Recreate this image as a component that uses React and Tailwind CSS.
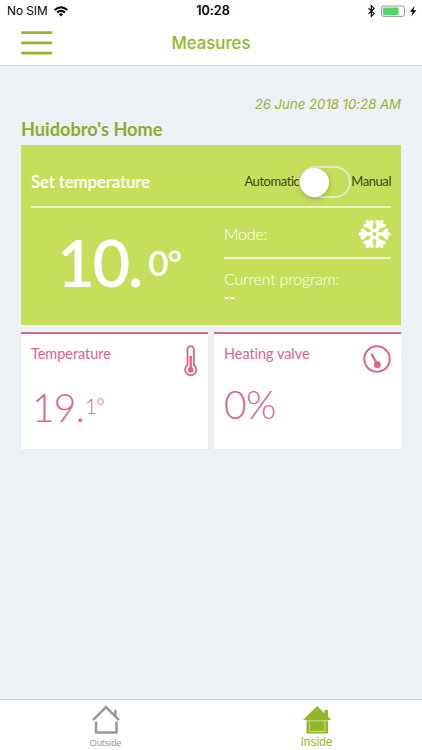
import React from "react";

function StatusBar() {
  return (
    <div className="grid h-[22px] grid-cols-3 items-center pl-[7px] pr-[5px] font-['Inter',sans-serif] text-black">
      <div className="flex items-center gap-[6px] text-[11.8px] leading-[22px]">
        <span className="whitespace-nowrap">No SIM</span>
        <svg width="14" height="11" viewBox="0 0 14 11" fill="none" stroke="black" strokeWidth="2">
          <path d="M.7 4.1Q7-1.5 13.3 4.1M3 6.6Q7 3.1 11 6.6" />
          <path d="M4.8 8.3Q7 6.4 9.2 8.3L7 10.6Z" fill="black" stroke="none" />
        </svg>
      </div>
      <div className="pl-[2px] text-center text-[12.5px] font-semibold leading-[22px]">10:28</div>
      <div className="flex items-center justify-end">
        <svg width="50" height="14" viewBox="0 0 50 14">
          <path d="M1.5 4.2l5.6 5.4-2.8 2.9V1.5l2.8 2.9-5.6 5.4" fill="none" stroke="black" strokeWidth="1.1" />
          <rect x="14.5" y="2" width="23" height="10.4" rx="2.4" fill="none" stroke="#9a9a9a" strokeWidth="1" />
          <rect x="16" y="3.5" width="15.5" height="7.4" rx="1" fill="#4cd964" />
          <path d="M39 5.6q1.4 1.5 0 3z" fill="#9a9a9a" />
          <path d="M47.6 1.8L43 7.7h2.7l-1.4 4.8 5-6.2h-2.9z" fill="black" />
        </svg>
      </div>
    </div>
  );
}

function NavBar() {
  return (
    <div className="flex h-[44px] items-start border-b border-[#d4d9df] pl-[21px] pt-[9px]">
      <svg width="32" height="25" viewBox="0 0 32 25" stroke="#93b72b" strokeWidth="2.8" strokeLinecap="round">
        <path d="M1.4 1.6h28.6M1.4 11.9h28.6M1.4 22.1h28.6" />
      </svg>
      <h1 className="flex-1 pr-[53px] text-center font-['Inter',sans-serif] text-[16.8px] font-medium leading-[24px] text-[#93b72b]">
        Measures
      </h1>
    </div>
  );
}

function Snowflake() {
  return (
    <svg width="33" height="30" viewBox="-16.5 -15 33 30" fill="none" stroke="white" strokeWidth="3.7" strokeLinecap="round">
      {[0, 60, 120, 180, 240, 300].map((a) => (
        <path key={a} transform={`rotate(${a})`} d="M3.8 0H14.2M12 -3.8L8.4 0L12 3.8" />
      ))}
      <circle r="3.4" strokeWidth="2.2" />
    </svg>
  );
}

function Toggle() {
  return (
    <div className="h-[32px] w-[52px] rounded-full border-2 border-[#e1e8cf]">
      <div className="-ml-px h-[29px] w-[29px] rounded-full bg-white shadow-[0_2px_5px_rgba(60,80,0,0.35)]" />
    </div>
  );
}

function SetTemperature() {
  return (
    <section className="h-[180px] bg-[#c5df5a] px-[10px] text-white">
      <div className="flex h-[63px] items-center justify-between border-b-2 border-[#e9f5b5] pt-[12px]">
        <h3 className="pt-[1px] text-[17px] font-semibold leading-[20px] tracking-[-0.2px]">Set temperature</h3>
        <div className="flex items-center text-[13px] tracking-[-0.45px] text-[#3c4a12]">
          <span>Automatic</span>
          <Toggle />
          <span>Manual</span>
        </div>
      </div>
      <div className="flex">
        <div className="flex w-[193px] items-start pl-[26px] pt-[15px] font-semibold">
          <span className="text-[65px] leading-[78px] tracking-[-2.2px]">10.</span>
          <span className="pl-[7px] pt-[18px] text-[35px] leading-[42px] tracking-[-1px]">0°</span>
        </div>
        <div className="flex-1 font-light">
          <div className="flex h-[51px] items-center justify-between border-b-2 border-[#f2fad0] pt-[2px]">
            <span className="pt-[1px] text-[16px] tracking-[-0.2px]">Mode:</span>
            <Snowflake />
          </div>
          <div className="pt-[10px] text-[16px] leading-[19px] tracking-[-0.2px]">Current program:</div>
          <div className="text-[15px] font-bold leading-[18px]">--</div>
        </div>
      </div>
    </section>
  );
}

function Thermometer() {
  return (
    <svg width="14" height="32" viewBox="0 0 14 32" fill="none" stroke="#dd6680">
      <path d="M3.5 20V4.3a3.2 3.2 0 0 1 6.4 0V20a5.6 5.6 0 1 1-6.4 0z" strokeWidth="1.8" />
      <path d="M6.7 10.8V24" strokeWidth="2.4" />
      <circle cx="6.7" cy="25" r="2.8" fill="#dd6680" stroke="none" />
    </svg>
  );
}

function Gauge() {
  return (
    <svg width="28" height="28" viewBox="0 0 28 28" fill="none" stroke="#dd6680">
      <circle cx="14" cy="14" r="12.7" strokeWidth="2" />
      <path d="M8.8 9.5L14 18.5" strokeWidth="2.3" strokeLinecap="round" />
      <circle cx="14.3" cy="19.7" r="3.4" fill="#dd6680" stroke="none" />
    </svg>
  );
}

function MeasureCard({ title, icon, children }) {
  return (
    <section className="h-[117px] border-t-2 border-[#dd6680] bg-white px-[10px] text-[#dd6680]">
      <div className="flex h-[44px] items-start justify-between pt-[11px]">
        <h3 className="text-[14.5px] leading-[18px] tracking-[-0.05px]">{title}</h3>
        {icon}
      </div>
      {children}
    </section>
  );
}

function TabBar() {
  return (
    <nav className="grid h-[51px] grid-cols-2 border-t border-[#c5cbd1] bg-white font-['Liberation_Sans',sans-serif]">
      <div className="flex flex-col items-center pt-[4px] text-[#999]">
        <svg width="30" height="31" viewBox="0 0 30 31" fill="none" stroke="#999" strokeWidth="2.5">
          <path d="M2 16.2L15 3l13 13.2M24.4 11.5V5.8" />
          <path d="M5 17.5V28.5h20.5V17.5" />
        </svg>
        <span className="pt-[2px] text-[9.3px] leading-[12px]">Outside</span>
      </div>
      <div className="flex flex-col items-center pt-[4px] text-[#93b72b]">
        <svg width="30" height="31" viewBox="0 0 30 31">
          <path d="M1 16L15 2l7.5 7.2V6H26v6.5l3 3.5z" fill="#93b72b" />
          <path d="M4.5 16h21.5v13.5H4.5z" fill="#93b72b" />
          <path d="M4 16.8h22.5M7.5 17v10.5h15.5V17" fill="none" stroke="#d8e6ae" strokeWidth=".8" />
        </svg>
        <span className="text-[12px] leading-[14px]">Inside</span>
      </div>
    </nav>
  );
}

export default function App() {
  return (
    <div className="flex h-[750px] w-[422px] flex-col overflow-hidden whitespace-nowrap bg-white font-['Lato',sans-serif] [font-variant-ligatures:none]">
      <StatusBar />
      <NavBar />
      <main className="flex-1 bg-[#ebf1f5] px-[21px] pt-[29px]">
        <div className="text-right font-['Inter',sans-serif] text-[13.2px] italic leading-[18px] text-[#93b72b]">
          26 June 2018 10:28 AM
        </div>
        <h2 className="pt-[5px] text-[18.2px] font-bold leading-[22px] text-[#8aae2c]">Huidobro's Home</h2>
        <div className="pt-[5px]">
          <SetTemperature />
        </div>
        <div className="grid grid-cols-2 gap-[6px] pt-[7px]">
          <MeasureCard title="Temperature" icon={<Thermometer />}>
            <div className="flex items-start pl-[1px] pt-[5px] font-light">
              <span className="text-[39px] leading-[48px] tracking-[-0.8px]">19.</span>
              <span className="pl-[1px] pt-[10px] text-[21px] leading-[26px] tracking-[-1px]">1°</span>
            </div>
          </MeasureCard>
          <MeasureCard title="Heating valve" icon={<Gauge />}>
            <div className="pt-[2px] text-[39px] font-light leading-[48px] tracking-[-0.5px]">0%</div>
          </MeasureCard>
        </div>
      </main>
      <TabBar />
    </div>
  );
}
